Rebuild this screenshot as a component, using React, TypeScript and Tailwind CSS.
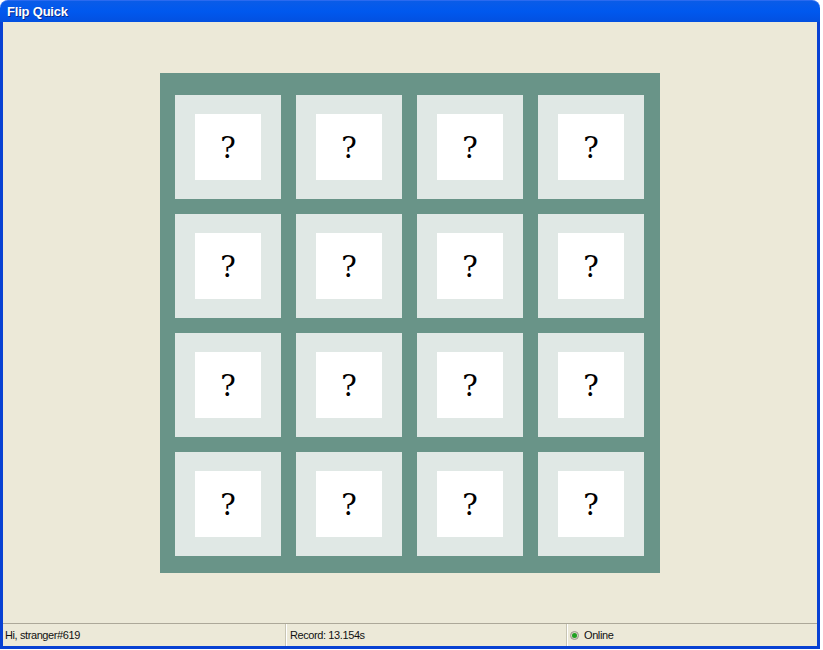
const cards = Array.from({ length: 16 }, (_, i) => i);

function StatusDot() {
  return (
    <span className="w-[9px] h-[9px] rounded-full bg-[#d6d2c2] border border-[#9c9a8c] flex items-center justify-center">
      <span className="w-[5px] h-[5px] rounded-full bg-[#21a121]" />
    </span>
  );
}

export default function App() {
  return (
    <div className="w-[823px] h-[650px] bg-white">
      <div
        className="w-[820px] h-[649px] flex flex-col"
        style={{ fontFamily: '"Liberation Sans", Arial, sans-serif' }}
      >
        {/* title bar */}
        <div className="h-[22px] shrink-0 rounded-t-[8px] bg-gradient-to-b from-[#0a5ce8] via-[#0058ee] to-[#0350e0] border-t border-[#2a6af0] flex items-center pl-[7px]">
          <span className="text-white font-bold text-[13px] tracking-[-0.2px] [text-shadow:1px_1px_0_#0a2a8a]">
            Flip Quick
          </span>
        </div>

        {/* body */}
        <div className="flex-1 flex flex-col border-x-[3px] border-b-[3px] border-[#0841d3] bg-[#ece9d8]">
          <div className="flex-1 flex items-center justify-center">
            <div className="w-[500px] h-[500px] bg-[#699488] pt-[22px] pl-[15px]">
              <div className="grid grid-cols-[repeat(4,106px)] auto-rows-[104px] gap-x-[15px] gap-y-[15px]">
                {cards.map((c) => (
                  <div key={c} className="bg-[#e0e8e5] flex items-center justify-center">
                    <div className="w-[66px] h-[66px] bg-white flex items-center justify-center pt-[3px]">
                      <span
                        className="text-[29px] leading-none text-black"
                        style={{ fontFamily: '"DejaVu Serif", "Liberation Serif", serif' }}
                      >
                        ?
                      </span>
                    </div>
                  </div>
                ))}
              </div>
            </div>
          </div>

          {/* status bar */}
          <div className="h-[23px] shrink-0 border-t border-[#aca899] flex text-[11px] tracking-[-0.4px] text-[#111]">
            <div className="w-[283px] flex items-center pl-[2px] border-r border-[#c8c5b4] shadow-[1px_0_0_#fff]">
              Hi, stranger#619
            </div>
            <div className="w-[280px] flex items-center pl-[3px] ml-[1px] border-r border-[#c8c5b4] shadow-[1px_0_0_#fff]">
              Record: 13.154s
            </div>
            <div className="flex-1 flex items-center gap-[5px] pl-[2px] ml-[1px]">
              <StatusDot />
              Online
            </div>
          </div>
        </div>
      </div>
    </div>
  );
}
